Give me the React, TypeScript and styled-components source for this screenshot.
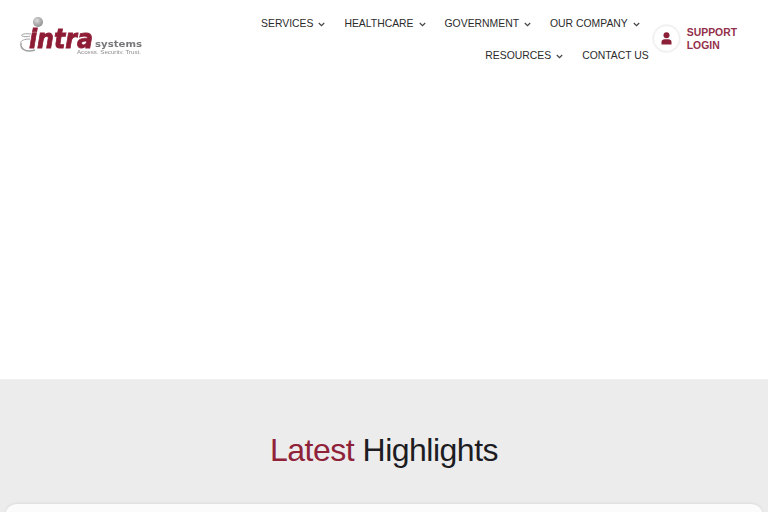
import React from "react";
import styled, { createGlobalStyle } from "styled-components";

const Global = createGlobalStyle`
  html, body { margin: 0; padding: 0; background: #fff; height: 100%; overflow: hidden; }
  body { font-family: "Liberation Sans", Arial, sans-serif; }
`;

const Page = styled.div`
  width: 768px;
  height: 512px;
  overflow: hidden;
  display: flex;
  flex-direction: column;
`;

const Header = styled.header`
  height: 380px;
  flex: none;
  display: flex;
  align-items: flex-start;
  justify-content: space-between;
  background: #fff;
  border-bottom: 1px solid #f1f1f1;
  box-sizing: border-box;
`;

const LogoBox = styled.a`
  display: block;
  width: 124px;
  height: 38px;
  margin: 16px 0 0 19px;
  filter: blur(0.45px);
`;

const NavArea = styled.div`
  display: flex;
  align-items: flex-start;
  margin-right: 31px;
`;

const Nav = styled.nav`
  display: flex;
  flex-direction: column;
  padding-top: 8px;
`;

const NavRow = styled.div<{ $inset?: number }>`
  display: flex;
  justify-content: flex-end;
  gap: 19px;
  height: 32px;
  padding-right: ${p => p.$inset ?? 0}px;
`;

const NavItem = styled.a`
  display: flex;
  align-items: center;
  gap: 5px;
  font-size: 10.4px;
  line-height: 14px;
  color: #2b2b2b;
  white-space: nowrap;
`;

const Caret = styled.svg`
  width: 7px;
  height: 5px;
  fill: none;
  stroke: #444;
  stroke-width: 1.2;
`;

const Support = styled.div`
  display: flex;
  align-items: center;
  gap: 7px;
  margin: 25px 0 0 4px;
`;

const Avatar = styled.div`
  width: 27px;
  height: 27px;
  border-radius: 50%;
  background: #fff;
  border: 1px solid #ededed;
  box-shadow: 0 0 0 1px #f6f6f6;
  display: flex;
  align-items: center;
  justify-content: center;
  box-sizing: border-box;
`;

const SupportLinks = styled.div`
  display: flex;
  flex-direction: column;
  font-size: 10.4px;
  line-height: 13px;
  font-weight: 700;
  color: #94304a;
`;

const Highlights = styled.section`
  flex: 1;
  background: #ececec;
  display: flex;
  flex-direction: column;
  align-items: center;
`;

const Title = styled.h2`
  margin: 50px 0 0;
  height: 40px;
  flex: none;
  font-size: 32px;
  line-height: 40px;
  font-weight: 400;
  letter-spacing: -0.5px;
  color: #1c1c22;
`;

const Accent = styled.span`
  color: #8f2239;
`;

const Card = styled.div`
  width: 758px;
  margin-top: 34px;
  height: 40px;
  flex: none;
  background: #fbfbfb;
  border-radius: 12px 12px 0 0;
  box-shadow: 0 -1px 3px rgba(0, 0, 0, 0.07);
`;

const Chevron = () => (
  <Caret viewBox="0 0 7 5">
    <path d="M0.8 1 L3.5 3.7 L6.2 1" />
  </Caret>
);

const Logo = () => (
  <svg width="124" height="38" viewBox="0 0 124 38">
    <defs>
      <radialGradient id="ball" cx="0.4" cy="0.35" r="0.7">
        <stop offset="0" stopColor="#dcdcdc" />
        <stop offset="1" stopColor="#8a8a8a" />
      </radialGradient>
    </defs>
    <circle cx="19" cy="6" r="5" fill="url(#ball)" />
    <g fill="none" stroke="#a2a2a2" strokeWidth="1">
      <path d="M12 18 C5 17 1 19 3 20 C5 21 9 21 11 20" />
      <path d="M11 23 C5 23 1 25 2 27" />
      <path d="M2 27 C1 33 7 37 16 34" strokeWidth="1.5" />
    </g>
    <text x="10" y="32" fontFamily="'DejaVu Sans', sans-serif" fontWeight="700" fontStyle="italic" fontSize="26" fill="#8f1c35" textLength="64" lengthAdjust="spacingAndGlyphs" stroke="#8f1c35" strokeWidth="0.8">intra</text>
    <text x="76" y="31" fontFamily="'DejaVu Sans', sans-serif" fontSize="9" fontWeight="700" fill="#77777a" textLength="47" lengthAdjust="spacingAndGlyphs">systems</text>
    <text x="58" y="38" fontFamily="'Liberation Sans', sans-serif" fontSize="5" fill="#8c8c8c" textLength="64" lengthAdjust="spacingAndGlyphs">Access. Security. Trust.</text>
  </svg>
);

const topRow = ["SERVICES", "HEALTHCARE", "GOVERNMENT", "OUR COMPANY"];

export default function App() {
  return (
    <Page>
      <Global />
      <Header>
        <LogoBox href="#"><Logo /></LogoBox>
        <NavArea>
          <Nav>
            <NavRow $inset={9}>
              {topRow.map(label => (
                <NavItem key={label}>{label}<Chevron /></NavItem>
              ))}
            </NavRow>
            <NavRow>
              <NavItem>RESOURCES<Chevron /></NavItem>
              <NavItem>CONTACT US</NavItem>
            </NavRow>
          </Nav>
          <Support>
            <Avatar>
              <svg width="11" height="13" viewBox="0 0 11 13" fill="#8b2038">
                <circle cx="5.5" cy="3.2" r="3" />
                <path d="M0.5 12.5 V10 C0.5 8.2 2 7.2 3.5 7.2 H7.5 C9 7.2 10.5 8.2 10.5 10 V12.5 Z" />
              </svg>
            </Avatar>
            <SupportLinks>
              <span>SUPPORT</span>
              <span>LOGIN</span>
            </SupportLinks>
          </Support>
        </NavArea>
      </Header>
      <Highlights>
        <Title><Accent>Latest</Accent> Highlights</Title>
        <Card />
      </Highlights>
    </Page>
  );
}
